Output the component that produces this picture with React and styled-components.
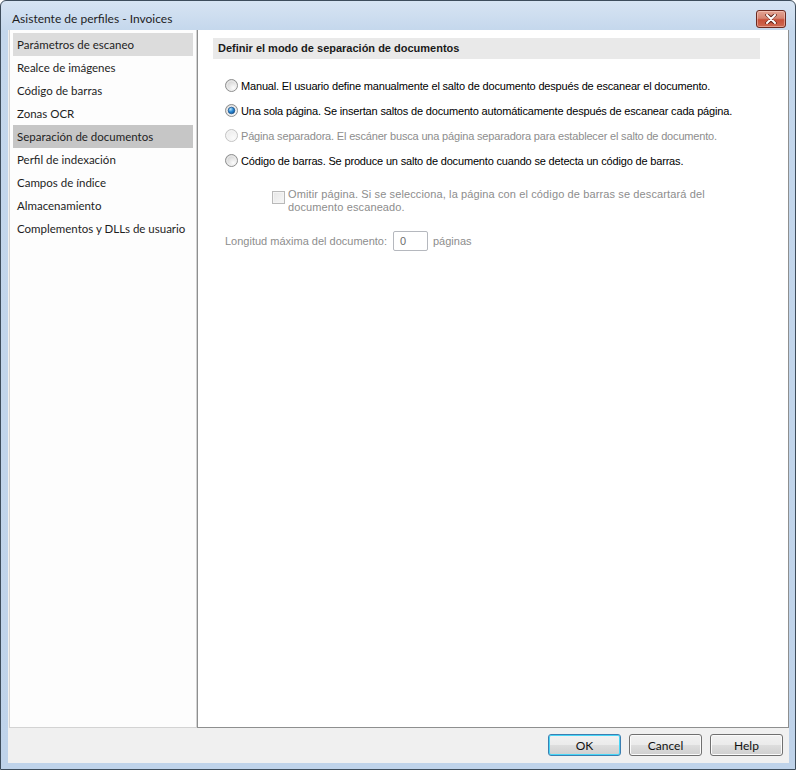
import React from 'react';
import styled, { createGlobalStyle } from 'styled-components';

const GlobalStyle = createGlobalStyle`
  html, body {
    margin: 0;
    padding: 0;
    background: #ffffff;
  }
  * {
    box-sizing: border-box;
  }
`;

const Window = styled.div`
  width: 796px;
  height: 770px;
  display: flex;
  flex-direction: column;
  border: 1px solid #3e4d5c;
  border-radius: 6px 6px 0 0;
  background: linear-gradient(#d7e4f3 0px, #c4d7ec 30px, #bfd3ea 100%);
  padding: 0 6px 6px 7px;
  overflow: hidden;
`;

const TitleBar = styled.div`
  height: 29px;
  flex: none;
  display: flex;
  align-items: center;
  justify-content: space-between;
  padding: 6px 3px 0 4px;
  font-family: Lato, "Liberation Sans", sans-serif;
  font-size: 12px;
  color: #1e1e1e;
`;

const CloseButton = styled.div`
  width: 30px;
  height: 18px;
  display: flex;
  align-items: center;
  justify-content: center;
  border: 1px solid #6b2a20;
  border-radius: 3px;
  background: linear-gradient(#e4a493 0%, #d58572 45%, #c75039 55%, #cf6a52 100%);
  box-shadow: inset 0 0 0 1px rgba(255, 220, 210, 0.45);
`;

const Client = styled.div`
  flex: 1;
  display: flex;
  flex-direction: column;
  background: #f0f0f0;
`;

const Body = styled.div`
  height: 698px;
  display: flex;
`;

const Sidebar = styled.div`
  width: 188px;
  margin-left: 1px;
  border: 1px solid #d3d3d3;
  border-top: none;
  background: #fdfdfd;
  padding: 3px 3px;
  font-family: Lato, "Liberation Sans", sans-serif;
  font-size: 11.5px;
  color: #1e1e1e;
  white-space: nowrap;
`;

const NavItem = styled.div`
  height: 23px;
  line-height: 23px;
  padding-left: 4px;
  background: ${(p) => (p.$selected ? '#c6c6c6' : p.$hover ? '#dcdcdc' : 'transparent')};
`;

const Panel = styled.div`
  flex: 1;
  background: #ffffff;
  border-left: 1px solid #8e8f8f;
  border-bottom: 1px solid #8e8f8f;
  border-right: 1px solid #8e8f8f;
  padding: 8px 28px 0 15px;
  font-family: "Liberation Sans", Arial, sans-serif;
  font-size: 11px;
`;

const Heading = styled.div`
  height: 21px;
  line-height: 21px;
  background: #e9e9e9;
  padding-left: 5px;
  font-weight: bold;
  color: #1a1a1a;
`;

const OptionList = styled.div`
  margin-top: 14px;
  padding-left: 12px;
  display: flex;
  flex-direction: column;
  letter-spacing: -0.17px;
`;

const OptionRow = styled.label`
  height: 25px;
  display: flex;
  align-items: center;
  gap: 3px;
  color: ${(p) => (p.$disabled ? '#8d8d8d' : '#000000')};
`;

const CheckRow = styled.div`
  margin-top: 15px;
  padding-left: 59px;
  display: flex;
  align-items: flex-start;
  gap: 3px;
  color: #8d8d8d;
  line-height: 13px;
  letter-spacing: 0.12px;
`;

const CheckBox = styled.div`
  width: 13px;
  height: 13px;
  margin-top: 3px;
  flex: none;
  border: 1px solid #b9b9b9;
  background: linear-gradient(135deg, #e6e6e6, #f7f7f7);
  box-shadow: inset 0 0 0 1px #f4f4f4;
`;

const LengthRow = styled.div`
  margin-top: 17px;
  padding-left: 12px;
  display: flex;
  align-items: center;
  color: #8d8d8d;
`;

const LengthLabel = styled.span`
  width: 168px;
`;

const NumberBox = styled.div`
  width: 35px;
  height: 20px;
  line-height: 18px;
  border: 1px solid #b5b8be;
  border-radius: 2px;
  padding-left: 6px;
  color: #6d6d6d;
  background: #ffffff;
`;

const Unit = styled.span`
  margin-left: 5px;
`;

const Footer = styled.div`
  flex: 1;
  display: flex;
  justify-content: flex-end;
  align-items: flex-start;
  gap: 8px;
  padding: 6px 6px 0 0;
`;

const Button = styled.div`
  width: 73px;
  height: 22px;
  display: flex;
  align-items: center;
  justify-content: center;
  border: 1px solid ${(p) => (p.$default ? '#3c7fb1' : '#707070')};
  border-radius: 3px;
  background: linear-gradient(#f2f2f2 0%, #ebebeb 48%, #dddddd 52%, #cfcfcf 100%);
  box-shadow: inset 0 0 0 1px ${(p) => (p.$default ? '#48d6f7' : '#fbfbfb')};
  font-family: Lato, "Liberation Sans", sans-serif;
  font-size: 12px;
  color: #111111;
`;

const navItems = [
  'Parámetros de escaneo',
  'Realce de imágenes',
  'Código de barras',
  'Zonas OCR',
  'Separación de documentos',
  'Perfil de indexación',
  'Campos de índice',
  'Almacenamiento',
  'Complementos y DLLs de usuario',
];

const options = [
  { text: 'Manual. El usuario define manualmente el salto de documento después de escanear el documento.' },
  { text: 'Una sola página. Se insertan saltos de documento automáticamente después de escanear cada página.', checked: true },
  { text: 'Página separadora. El escáner busca una página separadora para establecer el salto de documento.', disabled: true },
  { text: 'Código de barras. Se produce un salto de documento cuando se detecta un código de barras.' },
];

// radio de estilo Windows 7
const Radio = ({ checked, disabled }) => {
  const id = disabled ? 'rgDis' : 'rgOn';
  return (
    <svg width="13" height="13" viewBox="0 0 13 13" style={{ flex: 'none' }}>
      <defs>
        <radialGradient id={id} cx="0.65" cy="0.7" r="0.7">
          <stop offset="0" stopColor={disabled ? '#fbfbfb' : '#fdfdfd'} />
          <stop offset="1" stopColor={disabled ? '#ebebeb' : '#cfcfcf'} />
        </radialGradient>
        <radialGradient id="rgDot" cx="0.35" cy="0.3" r="0.8">
          <stop offset="0" stopColor="#b7e3fb" />
          <stop offset="0.5" stopColor="#2b8ad6" />
          <stop offset="1" stopColor="#0d4b8a" />
        </radialGradient>
      </defs>
      <circle cx="6.5" cy="6.5" r="6" fill={`url(#${id})`} stroke={disabled ? '#c4c4c4' : '#8e8f8f'} />
      <circle cx="6.5" cy="6.5" r="4.6" fill="none" stroke={disabled ? '#f7f7f7' : '#f2f2f2'} strokeWidth="0.8" />
      {checked && <circle cx="6.5" cy="6.5" r="3.3" fill="url(#rgDot)" stroke="#1a4f86" strokeWidth="0.7" />}
    </svg>
  );
};

const CloseIcon = () => (
  <svg width="12" height="10" viewBox="0 0 12 10">
    <path
      d="M2 1 L6 4 L10 1 M2 9 L6 6 L10 9 M6 4 L6 6"
      fill="none"
      stroke="#5a1f16"
      strokeWidth="3.4"
      strokeLinecap="round"
    />
    <path d="M2 1 L10 9 M10 1 L2 9" fill="none" stroke="#ffffff" strokeWidth="2" strokeLinecap="round" />
  </svg>
);

export default function App() {
  return (
    <>
      <GlobalStyle />
      <Window>
        <TitleBar>
          <span>Asistente de perfiles - Invoices</span>
          <CloseButton>
            <CloseIcon />
          </CloseButton>
        </TitleBar>
        <Client>
          <Body>
            <Sidebar>
              {navItems.map((item, i) => (
                <NavItem key={item} $hover={i === 0} $selected={i === 4}>
                  {item}
                </NavItem>
              ))}
            </Sidebar>
            <Panel>
              <Heading>Definir el modo de separación de documentos</Heading>
              <OptionList>
                {options.map((opt) => (
                  <OptionRow key={opt.text} $disabled={opt.disabled}>
                    <Radio checked={opt.checked} disabled={opt.disabled} />
                    <span>{opt.text}</span>
                  </OptionRow>
                ))}
              </OptionList>
              <CheckRow>
                <CheckBox />
                <span>
                  Omitir página. Si se selecciona, la página con el código de barras se descartará del
                  <br />
                  documento escaneado.
                </span>
              </CheckRow>
              <LengthRow>
                <LengthLabel>Longitud máxima del documento:</LengthLabel>
                <NumberBox>0</NumberBox>
                <Unit>páginas</Unit>
              </LengthRow>
            </Panel>
          </Body>
          <Footer>
            <Button $default>OK</Button>
            <Button>Cancel</Button>
            <Button>Help</Button>
          </Footer>
        </Client>
      </Window>
    </>
  );
}
